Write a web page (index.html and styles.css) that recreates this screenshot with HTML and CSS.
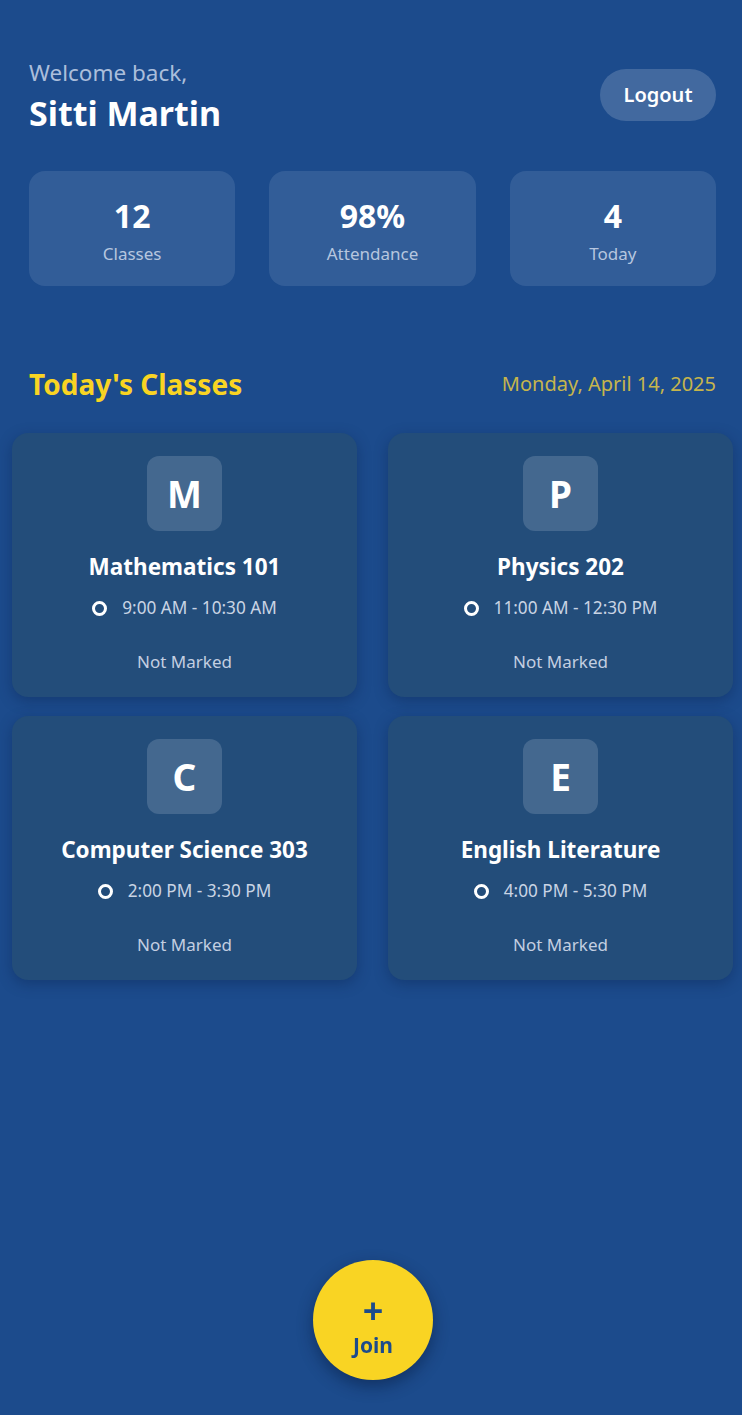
FILE: index.html
```html
<!DOCTYPE html>
<html lang="en">
<head>
<meta charset="utf-8">
<title>Dashboard</title>
<link rel="stylesheet" href="styles.css">
</head>
<body>
<div class="page">
  <header class="top">
    <div class="greet">
      <div class="welcome">Welcome back,</div>
      <div class="name">Sitti Martin</div>
    </div>
    <button class="logout">Logout</button>
  </header>

  <section class="stats">
    <div class="stat"><div class="num">12</div><div class="lbl">Classes</div></div>
    <div class="stat"><div class="num">98%</div><div class="lbl">Attendance</div></div>
    <div class="stat"><div class="num">4</div><div class="lbl">Today</div></div>
  </section>

  <div class="sec-head">
    <h2 class="sec-title">Today's Classes</h2>
    <div class="date">Monday, April 14, 2025</div>
  </div>

  <section class="grid">
    <div class="card">
      <div class="badge">M</div>
      <div class="title">Mathematics 101</div>
      <div class="time"><span class="ring"></span>9:00 AM - 10:30 AM</div>
      <div class="status">Not Marked</div>
    </div>
    <div class="card">
      <div class="badge">P</div>
      <div class="title">Physics 202</div>
      <div class="time"><span class="ring"></span>11:00 AM - 12:30 PM</div>
      <div class="status">Not Marked</div>
    </div>
    <div class="card">
      <div class="badge">C</div>
      <div class="title">Computer Science 303</div>
      <div class="time"><span class="ring"></span>2:00 PM - 3:30 PM</div>
      <div class="status">Not Marked</div>
    </div>
    <div class="card">
      <div class="badge">E</div>
      <div class="title">English Literature</div>
      <div class="time"><span class="ring"></span>4:00 PM - 5:30 PM</div>
      <div class="status">Not Marked</div>
    </div>
  </section>
</div>

<button class="join">
  <span class="plus">+</span>
  <span class="join-lbl">Join</span>
</button>
</body>
</html>
```

FILE: styles.css
```css
* { box-sizing: border-box; }

html, body {
  margin: 0;
  padding: 0;
  background: #1c4b8c;
  min-height: 100%;
}

body {
  font-family: "Noto Sans", "Open Sans", sans-serif;
  color: #ffffff;
  min-height: 1415px;
}

.page {
  padding-top: 58px;
}

.top {
  display: flex;
  justify-content: space-between;
  align-items: center;
  padding: 0 26px 0 29px;
}

.welcome {
  font-size: 22.5px;
  line-height: 30px;
  color: #abbedb;
}

.name {
  font-size: 34px;
  font-weight: 700;
  line-height: 44px;
  margin-top: 3px;
  color: #ffffff;
}

.logout {
  font-family: inherit;
  font-size: 20px;
  font-weight: 600;
  color: #ffffff;
  background: rgba(255, 255, 255, 0.17);
  border: none;
  border-radius: 26px;
  width: 116px;
  height: 52px;
  margin-top: -4px;
}

.stats {
  display: grid;
  grid-template-columns: repeat(3, 1fr);
  column-gap: 34px;
  padding: 0 26px 0 29px;
  margin-top: 36px;
}

.stat {
  background: #325d98;
  border-radius: 16px;
  height: 115px;
  display: flex;
  flex-direction: column;
  align-items: center;
  padding-top: 25px;
}

.stat .num {
  font-size: 32px;
  font-weight: 700;
  line-height: 40px;
}

.stat .lbl {
  font-size: 17px;
  line-height: 24px;
  margin-top: 6px;
  color: #b6c6df;
}

.sec-head {
  display: flex;
  justify-content: space-between;
  align-items: center;
  padding: 0 26px 0 29px;
  margin-top: 78px;
  height: 40px;
}

.sec-title {
  margin: 0;
  font-size: 28px;
  font-weight: 700;
  line-height: 40px;
  color: #f9d423;
}

.date {
  font-size: 20px;
  line-height: 28px;
  color: #c6b54c;
}

.grid {
  display: grid;
  grid-template-columns: 345px 345px;
  column-gap: 31px;
  row-gap: 19px;
  padding: 0 9px 0 12px;
  margin-top: 29px;
}

.card {
  background: #234d7a;
  border-radius: 16px;
  height: 264px;
  display: flex;
  flex-direction: column;
  align-items: center;
  padding-top: 23px;
  box-shadow: 0 4px 14px rgba(10, 30, 70, 0.35);
}

.badge {
  width: 75px;
  height: 75px;
  border-radius: 12px;
  background: #44688f;
  display: flex;
  align-items: center;
  justify-content: center;
  font-size: 37px;
  font-weight: 700;
  color: #ffffff;
}

.title {
  margin-top: 21px;
  font-size: 22.5px;
  font-weight: 700;
  line-height: 30px;
}

.time {
  margin-top: 14px;
  display: flex;
  align-items: center;
  gap: 15px;
  font-size: 17.2px;
  line-height: 24px;
  color: #c9d4e4;
}

.ring {
  width: 15px;
  height: 15px;
  border: 3px solid #ffffff;
  border-radius: 50%;
}

.status {
  margin-top: 30px;
  font-size: 17px;
  line-height: 24px;
  color: #c3cfe1;
}

.join {
  position: fixed;
  left: 313px;
  top: 1260px;
  width: 120px;
  height: 120px;
  border-radius: 50%;
  border: none;
  background: #f9d423;
  box-shadow: 0 6px 16px rgba(5, 20, 50, 0.45);
  display: flex;
  flex-direction: column;
  align-items: center;
  justify-content: center;
  font-family: inherit;
  color: #1c4b8c;
  padding: 11px 0 0 0;
}

.plus {
  font-size: 36px;
  font-weight: 700;
  line-height: 34px;
}

.join-lbl {
  font-size: 21px;
  font-weight: 700;
  line-height: 26px;
  margin-top: 4px;
}
```
